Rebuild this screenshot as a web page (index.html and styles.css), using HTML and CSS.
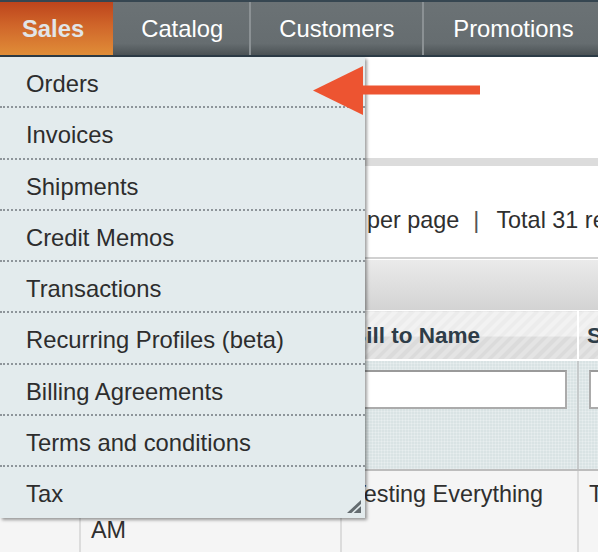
FILE: index.html
```html
<!DOCTYPE html>
<html lang="en">
<head>
<meta charset="utf-8">
<title>Sales menu</title>
<link rel="stylesheet" href="styles.css">
</head>
<body>
<nav class="nav">
  <div class="nav-tab nav-tab-active">Sales</div>
  <div class="nav-tab nav-tab-first">Catalog</div>
  <div class="nav-tab">Customers</div>
  <div class="nav-tab nav-tab-last">Promotions</div>
</nav>

<main class="content">
  <div class="head-space"></div>
  <div class="divider"></div>
  <div class="pager">
    <div class="pager-lead"></div>
    <span>per page</span>
    <span class="pager-sep">|</span>
    <span>Total 31 records found</span>
  </div>
  <div class="grid">
    <div class="grid-toolbar"></div>
    <table class="grid-table">
      <colgroup>
        <col class="col-check">
        <col class="col-date">
        <col class="col-name">
        <col class="col-name2">
      </colgroup>
      <thead>
        <tr class="grid-head">
          <th></th>
          <th></th>
          <th>Bill to Name</th>
          <th>Ship to Name</th>
        </tr>
        <tr class="grid-filter">
          <td></td>
          <td><div class="filter-input"></div></td>
          <td><div class="filter-input"></div></td>
          <td><div class="filter-input"></div></td>
        </tr>
      </thead>
      <tbody>
        <tr class="grid-row">
          <td></td>
          <td>Jul 7, 2014 10:14:38 AM</td>
          <td>Testing Everything</td>
          <td>Testing Everything</td>
        </tr>
      </tbody>
    </table>
  </div>
</main>

<ul class="menu">
  <li class="menu-item">Orders</li>
  <li class="menu-item">Invoices</li>
  <li class="menu-item">Shipments</li>
  <li class="menu-item">Credit Memos</li>
  <li class="menu-item">Transactions</li>
  <li class="menu-item">Recurring Profiles (beta)</li>
  <li class="menu-item">Billing Agreements</li>
  <li class="menu-item">Terms and conditions</li>
  <li class="menu-item">Tax</li>
  <svg class="menu-grip" width="16" height="15" viewBox="0 0 16 15">
    <polygon points="1,14 15,1 15,14" fill="#646c70"/>
    <line x1="6" y1="14.5" x2="15.5" y2="5.5" stroke="#e3ebed" stroke-width="1.6"/>
  </svg>
</ul>

<svg class="arrow" width="175" height="58" viewBox="0 0 175 58">
  <polygon points="3,28.5 53,4 53,53" fill="#ed5431"/>
  <rect x="52" y="23.5" width="118" height="9" fill="#ed5431"/>
</svg>
</body>
</html>
```

FILE: styles.css
```css
* {
  box-sizing: border-box;
}

html,
body {
  margin: 0;
  padding: 0;
}

body {
  position: relative;
  width: 598px;
  height: 552px;
  overflow: hidden;
  background: #fff;
  font-family: "Liberation Sans", Arial, sans-serif;
  color: #2f2f2f;
}

/* ---------- top navigation ---------- */
.nav {
  display: flex;
  height: 57px;
  border-top: 2px solid #364651;
  border-bottom: 2px solid #2c3b46;
  background: linear-gradient(#6b7275, #666d70 78%, #4b5255);
}

.nav-tab {
  padding: 1px 28px 0 28px;
  line-height: 52px;
  font-size: 23.8px;
  color: #fff;
  white-space: nowrap;
  border-left: 2px solid #8b9194;
}

.nav-tab-first {
  border-left: none;
  padding: 1px 26px 0 28px;
}

.nav-tab-last {
  padding-left: 29px;
}

.nav-tab-active {
  border-left: none;
  padding: 1px 29px 0 22px;
  font-weight: bold;
  color: #e1e5e8;
  background: linear-gradient(#bd441c, #d0662a 45%, #e08d38);
}

/* ---------- page content ---------- */
.head-space {
  height: 101px;
}

.divider {
  height: 8px;
  background: #dcdcdc;
}

.pager {
  display: flex;
  height: 91px;
  padding-top: 40px;
  font-size: 23.4px;
  line-height: 28px;
  white-space: nowrap;
  color: #2f2f2f;
}

.pager-lead {
  flex: 0 0 367px;
}

.pager-sep {
  margin: 0 17px 0 14px;
  color: #555;
}

.grid-toolbar {
  height: 53px;
  border-top: 2px solid #d1d1d1;
  box-shadow: inset 0 1px #fff;
  background: linear-gradient(#ebebeb, #d3d3d3);
}

.grid-table {
  width: 820px;
  table-layout: fixed;
  border-collapse: collapse;
}

.col-check {
  width: 80px;
}

.col-date {
  width: 261px;
}

.col-name {
  width: 237px;
}

.col-name2 {
  width: 242px;
}

.grid-head th {
  height: 49px;
  padding: 3px 8px 0;
  text-align: left;
  font-size: 22.5px;
  font-weight: bold;
  color: #2e3d48;
  white-space: nowrap;
  overflow: hidden;
  border-top: 1px solid #fff;
  border-right: 2px solid #fff;
  border-bottom: 2px solid #fff;
  background:
    linear-gradient(rgba(255, 255, 255, 0.35) 0 52%, rgba(0, 0, 0, 0.03) 52%),
    repeating-linear-gradient(135deg, #e2e2e2 0 4px, #ebebeb 4px 8px);
}

.grid-filter td {
  height: 110px;
  padding: 9px 10px 0;
  vertical-align: top;
  border-right: 2px solid #c6cacb;
  border-bottom: 2px solid #bdbdbd;
  background-color: #d9e3e4;
  background-image:
    repeating-linear-gradient(90deg, rgba(255, 255, 255, 0.22) 0 1px, transparent 1px 3px),
    repeating-linear-gradient(0deg, rgba(255, 255, 255, 0.22) 0 1px, transparent 1px 3px);
}

.filter-input {
  height: 39px;
  background: #fff;
  border: 2px solid #ababab;
  border-top-color: #9a9a9a;
}

.grid-row td {
  padding: 5px 10px;
  vertical-align: top;
  font-size: 23.4px;
  line-height: 36px;
  color: #2f2f2f;
  background: #f5f5f5;
  border-right: 2px solid #dcdcdc;
}

/* ---------- dropdown menu ---------- */
.menu {
  position: absolute;
  top: 57px;
  left: 0;
  z-index: 2;
  width: 365px;
  margin: 0;
  padding: 0;
  list-style: none;
  background: #e3ebed;
  box-shadow: 2px 2px 3px rgba(0, 0, 0, 0.38);
}

.menu-item {
  height: 51.25px;
  padding: 2px 0 0 26px;
  line-height: 50px;
  font-size: 23.8px;
  color: #2d2d2d;
  white-space: nowrap;
  border-bottom: 2px dotted #8e959a;
}

.menu-item:nth-last-child(2) {
  border-bottom: none;
}

.menu-grip {
  position: absolute;
  right: 3px;
  bottom: 4px;
}

.arrow {
  position: absolute;
  left: 310px;
  top: 62px;
  z-index: 3;
}
```
